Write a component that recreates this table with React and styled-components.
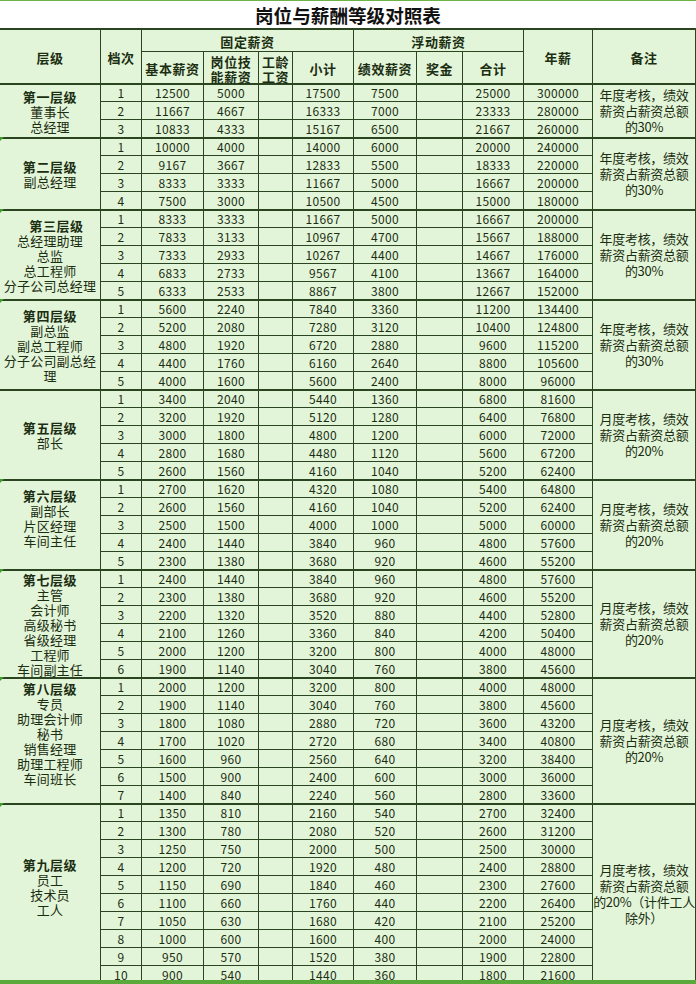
import React from 'react';
import styled, { createGlobalStyle } from 'styled-components';

const BORDER = '#2b4520';
const CELL = '#e3f5d9';
const INK = '#1b2e12';
const COLS = '100px 40px 61px 54px 33px 60px 62px 45px 60px 68px 102px';

const Global = createGlobalStyle`
  html, body { margin: 0; padding: 0; background: #fff; }
  body { font-family: "Noto Sans CJK SC", "Noto Sans", sans-serif; color: ${INK}; }
`;

const Page = styled.div`
  width: 696px;
  height: 984px;
  display: flex;
  flex-direction: column;
  overflow: hidden;
`;

const Sheet = styled.div`
  flex: 1;
  overflow: hidden;
  min-height: 0;
`;

const TitleBar = styled.div`
  height: 26px;
  border-top: 1px solid #6cb544;
  border-bottom: 2px solid ${BORDER};
  background: #fff;
  display: flex;
  align-items: center;
  justify-content: center;
  font-size: 18.6px;
  font-weight: 700;
  color: #111;
  line-height: 26px;
  padding-top: 1px;
  box-sizing: content-box;
`;

const Header = styled.div`
  display: grid;
  grid-template-columns: ${COLS};
  grid-template-rows: 21px 31px;
  gap: 1px;
  padding-right: 1px;
  background: ${BORDER};
`;

const HeadCell = styled.div`
  grid-column: ${(p) => p.$col};
  grid-row: ${(p) => p.$row};
  background: ${CELL};
  display: flex;
  align-items: center;
  justify-content: center;
  text-align: center;
  font-size: 13px;
  font-weight: 700;
  letter-spacing: 0.6px;
  line-height: 15px;
  padding-top: 2px;
  color: ${INK};
`;

const Group = styled.div`
  display: grid;
  grid-template-columns: ${COLS};
  grid-template-rows: 16px repeat(${(p) => p.$rows - 1}, 17px);
  gap: 1px;
  padding-right: 1px;
  border-top: 2px solid ${BORDER};
  background: ${BORDER};
`;

const LevelCell = styled.div`
  position: relative;
  grid-column: 1;
  grid-row: 1 / -1;
  background: ${CELL};
  display: flex;
  flex-direction: column;
  align-items: center;
  justify-content: center;
  font-size: 13px;
  line-height: 15px;
  white-space: nowrap;
  &::before {
    content: '';
    display: ${(p) => (p.$mark ? 'block' : 'none')};
    position: absolute;
    top: -2px;
    left: 0;
    border-top: 4px solid #3f9b2c;
    border-right: 4px solid transparent;
  }
`;

const LevelLine = styled.span`
  display: block;
  height: 15px;
  font-weight: ${(p) => (p.$strong ? 700 : 400)};
  letter-spacing: ${(p) => (p.$strong ? '0.6px' : '0.2px')};
  padding-left: ${(p) => p.$indent || 0}px;
`;

const RemarkCell = styled.div`
  grid-column: 11;
  grid-row: 1 / -1;
  background: ${CELL};
  display: flex;
  flex-direction: column;
  align-items: center;
  justify-content: center;
  font-size: 13px;
  line-height: 16px;
  letter-spacing: -0.3px;
  white-space: nowrap;
`;

const NumCell = styled.div`
  background: ${CELL};
  display: flex;
  align-items: center;
  justify-content: center;
  font-size: 12px;
  line-height: 16px;
  letter-spacing: 0.3px;
  color: ${INK};
`;

const BottomBar = styled.div`
  height: 4px;
  flex: none;
  background: #5ba93a;
`;

const YEAR30 = ['年度考核，绩效', '薪资占薪资总额', '的30%'];
const MONTH20 = ['月度考核，绩效', '薪资占薪资总额', '的20%'];

const groups = [
  {
    lines: ['第一层级', '董事长', '总经理'],
    remark: YEAR30,
    rows: [
      [12500, 5000, 17500, 7500, 25000, 300000],
      [11667, 4667, 16333, 7000, 23333, 280000],
      [10833, 4333, 15167, 6500, 21667, 260000],
    ],
  },
  {
    lines: ['第二层级', '副总经理'],
    remark: YEAR30,
    mark: true,
    rows: [
      [10000, 4000, 14000, 6000, 20000, 240000],
      [9167, 3667, 12833, 5500, 18333, 220000],
      [8333, 3333, 11667, 5000, 16667, 200000],
      [7500, 3000, 10500, 4500, 15000, 180000],
    ],
  },
  {
    lines: ['第三层级', '总经理助理', '总监', '总工程师', '分子公司总经理'],
    indent: 13,
    remark: YEAR30,
    mark: true,
    rows: [
      [8333, 3333, 11667, 5000, 16667, 200000],
      [7833, 3133, 10967, 4700, 15667, 188000],
      [7333, 2933, 10267, 4400, 14667, 176000],
      [6833, 2733, 9567, 4100, 13667, 164000],
      [6333, 2533, 8867, 3800, 12667, 152000],
    ],
  },
  {
    lines: ['第四层级', '副总监', '副总工程师', '分子公司副总经', '理'],
    remark: YEAR30,
    mark: true,
    rows: [
      [5600, 2240, 7840, 3360, 11200, 134400],
      [5200, 2080, 7280, 3120, 10400, 124800],
      [4800, 1920, 6720, 2880, 9600, 115200],
      [4400, 1760, 6160, 2640, 8800, 105600],
      [4000, 1600, 5600, 2400, 8000, 96000],
    ],
  },
  {
    lines: ['第五层级', '部长'],
    remark: MONTH20,
    rows: [
      [3400, 2040, 5440, 1360, 6800, 81600],
      [3200, 1920, 5120, 1280, 6400, 76800],
      [3000, 1800, 4800, 1200, 6000, 72000],
      [2800, 1680, 4480, 1120, 5600, 67200],
      [2600, 1560, 4160, 1040, 5200, 62400],
    ],
  },
  {
    lines: ['第六层级', '副部长', '片区经理', '车间主任', ''],
    remark: MONTH20,
    mark: true,
    rows: [
      [2700, 1620, 4320, 1080, 5400, 64800],
      [2600, 1560, 4160, 1040, 5200, 62400],
      [2500, 1500, 4000, 1000, 5000, 60000],
      [2400, 1440, 3840, 960, 4800, 57600],
      [2300, 1380, 3680, 920, 4600, 55200],
    ],
  },
  {
    lines: ['第七层级', '主管', '会计师', '高级秘书', '省级经理', '工程师', '车间副主任'],
    remark: MONTH20,
    mark: true,
    rows: [
      [2400, 1440, 3840, 960, 4800, 57600],
      [2300, 1380, 3680, 920, 4600, 55200],
      [2200, 1320, 3520, 880, 4400, 52800],
      [2100, 1260, 3360, 840, 4200, 50400],
      [2000, 1200, 3200, 800, 4000, 48000],
      [1900, 1140, 3040, 760, 3800, 45600],
    ],
  },
  {
    lines: ['第八层级', '专员', '助理会计师', '秘书', '销售经理', '助理工程师', '车间班长', ''],
    remark: MONTH20,
    mark: true,
    rows: [
      [2000, 1200, 3200, 800, 4000, 48000],
      [1900, 1140, 3040, 760, 3800, 45600],
      [1800, 1080, 2880, 720, 3600, 43200],
      [1700, 1020, 2720, 680, 3400, 40800],
      [1600, 960, 2560, 640, 3200, 38400],
      [1500, 900, 2400, 600, 3000, 36000],
      [1400, 840, 2240, 560, 2800, 33600],
    ],
  },
  {
    lines: ['第九层级', '员工', '技术员', '工人', ''],
    remark: ['月度考核，绩效', '薪资占薪资总额', '的20%（计件工人', '除外）'],
    mark: true,
    rows: [
      [1350, 810, 2160, 540, 2700, 32400],
      [1300, 780, 2080, 520, 2600, 31200],
      [1250, 750, 2000, 500, 2500, 30000],
      [1200, 720, 1920, 480, 2400, 28800],
      [1150, 690, 1840, 460, 2300, 27600],
      [1100, 660, 1760, 440, 2200, 26400],
      [1050, 630, 1680, 420, 2100, 25200],
      [1000, 600, 1600, 400, 2000, 24000],
      [950, 570, 1520, 380, 1900, 22800],
      [900, 540, 1440, 360, 1800, 21600],
    ],
  },
];

function LevelGroup({ group }) {
  return (
    <Group $rows={group.rows.length}>
      <LevelCell $mark={group.mark}>
        {group.lines.map((l, i) => (
          <LevelLine key={i} $strong={i === 0} $indent={i === 0 ? group.indent : 0}>
            {l}
          </LevelLine>
        ))}
      </LevelCell>
      <RemarkCell>
        {group.remark.map((l, i) => (
          <span key={i}>{l}</span>
        ))}
      </RemarkCell>
      {group.rows.map((r, i) => {
        const [base, post, sub, perf, total, year] = r;
        const cells = [i + 1, base, post, '', sub, perf, '', total, year];
        return cells.map((v, j) => <NumCell key={`${i}-${j}`}>{v}</NumCell>);
      })}
    </Group>
  );
}

export default function App() {
  return (
    <Page>
      <Global />
      <Sheet>
        <TitleBar>岗位与薪酬等级对照表</TitleBar>
        <Header>
          <HeadCell $col="1" $row="1 / 3">层级</HeadCell>
          <HeadCell $col="2" $row="1 / 3">档次</HeadCell>
          <HeadCell $col="3 / 7" $row="1">固定薪资</HeadCell>
          <HeadCell $col="7 / 10" $row="1">浮动薪资</HeadCell>
          <HeadCell $col="10" $row="1 / 3">年薪</HeadCell>
          <HeadCell $col="11" $row="1 / 3">备注</HeadCell>
          <HeadCell $col="3" $row="2">基本薪资</HeadCell>
          <HeadCell $col="4" $row="2">岗位技<br />能薪资</HeadCell>
          <HeadCell $col="5" $row="2">工龄<br />工资</HeadCell>
          <HeadCell $col="6" $row="2">小计</HeadCell>
          <HeadCell $col="7" $row="2">绩效薪资</HeadCell>
          <HeadCell $col="8" $row="2">奖金</HeadCell>
          <HeadCell $col="9" $row="2">合计</HeadCell>
        </Header>
        {groups.map((g, i) => (
          <LevelGroup key={i} group={g} />
        ))}
      </Sheet>
      <BottomBar />
    </Page>
  );
}
